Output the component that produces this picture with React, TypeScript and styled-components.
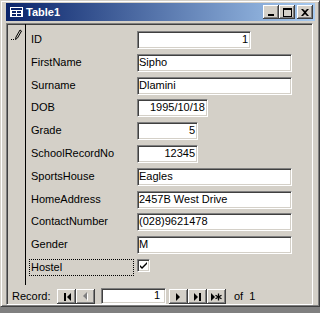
import React from 'react';
import styled, { createGlobalStyle, css } from 'styled-components';

const GlobalStyle = createGlobalStyle`
  html, body { margin: 0; padding: 0; }
  body {
    background: #808080;
    width: 320px;
    height: 313px;
    overflow: hidden;
    font-family: "Liberation Sans", Arial, sans-serif;
    font-size: 11px;
    color: #000;
  }
`;

const raised = css`
  background: #d4d0c8;
  box-shadow: inset -1px -1px #404040, inset 1px 1px #ffffff,
    inset -2px -2px #808080, inset 2px 2px #d4d0c8;
`;

const sunken = css`
  border: 1px solid;
  border-color: #808080 #ffffff #ffffff #808080;
  box-shadow: inset 1px 1px #404040, inset -1px -1px #d4d0c8;
`;

const Window = styled.div`
  box-sizing: border-box;
  width: 320px;
  height: 307px;
  background: #d4d0c8;
  border: 1px solid;
  border-color: #d4d0c8 #404040 #404040 #d4d0c8;
  box-shadow: inset 1px 1px #ffffff, inset -1px -1px #808080;
  padding: 2px 4px 1px 5px;
  display: flex;
  flex-direction: column;
`;

const TitleBar = styled.div`
  height: 18px;
  flex: none;
  display: flex;
  align-items: center;
  padding: 0 2px 0 4px;
  background: linear-gradient(to right, #0a246a, #a6caf0);
  color: #fff;
  font-weight: bold;
  font-size: 11px;
`;

const TitleText = styled.span`
  flex: 1;
  margin-left: 3px;
  line-height: 18px;
`;

const CaptionButtons = styled.div`
  display: flex;
  align-items: center;
`;

const CaptionButton = styled.div<{ $gap?: boolean }>`
  ${raised};
  width: 16px;
  height: 14px;
  display: flex;
  align-items: center;
  justify-content: center;
  margin-left: ${(p) => (p.$gap ? '2px' : '0')};
`;

const Client = styled.div`
  ${sunken};
  flex: 1;
  margin: 2px 2px 0 0;
  display: flex;
  flex-direction: column;
  min-height: 0;
`;

const FormArea = styled.div`
  flex: 1;
  display: flex;
  min-height: 0;
`;

const RecordSelector = styled.div`
  box-sizing: border-box;
  width: 19px;
  border-right: 1px solid #000;
  padding: 5px 0 0 4px;
`;

const Detail = styled.div`
  flex: 1;
  display: flex;
  flex-direction: column;
  gap: 4.8px;
  padding-top: 7px;
`;

const Row = styled.div`
  display: flex;
  align-items: flex-start;
  height: 18px;
`;

const Label = styled.div<{ $focused?: boolean }>`
  box-sizing: border-box;
  width: 105px;
  height: 17px;
  margin: 0 3px;
  padding-left: 1px;
  line-height: 15px;
  border: 1px dotted ${(p) => (p.$focused ? '#000' : 'transparent')};
  white-space: nowrap;
`;

const TextBox = styled.div<{ $w: number; $right?: boolean }>`
  ${sunken};
  box-sizing: border-box;
  width: ${(p) => p.$w}px;
  height: 18px;
  background: #fff;
  line-height: 14px;
  padding: 0 2px 0 1px;
  text-align: ${(p) => (p.$right ? 'right' : 'left')};
  white-space: nowrap;
  overflow: hidden;
`;

const CheckBox = styled.div`
  ${sunken};
  box-sizing: border-box;
  width: 13px;
  height: 13px;
  background: #fff;
  display: flex;
  align-items: center;
  justify-content: center;
`;

const NavBar = styled.div`
  box-sizing: border-box;
  height: 19px;
  flex: none;
  display: flex;
  align-items: flex-start;
  padding: 4px 0 0 5px;
`;

const NavLabel = styled.span`
  width: 45px;
  line-height: 15px;
`;

const NavButton = styled.div`
  ${raised};
  width: 19px;
  height: 15px;
  display: flex;
  align-items: center;
  justify-content: center;
`;

const NavBox = styled.div`
  ${sunken};
  box-sizing: border-box;
  width: 65px;
  height: 16px;
  margin: -1px 3px 0 6px;
  background: #fff;
  text-align: right;
  line-height: 12px;
  padding-right: 5px;
`;

const NavOf = styled.span`
  margin-left: 8px;
  line-height: 15px;
`;

const TableIcon = () => (
  <svg width="13" height="10" viewBox="0 0 13 10">
    <rect x="0.5" y="0.5" width="12" height="9" fill="#ffffff" stroke="#ffffff" />
    <rect x="1" y="1" width="11" height="2" fill="#0a246a" />
    <rect x="2" y="4" width="4" height="2" fill="#0a246a" />
    <rect x="7" y="4" width="4" height="2" fill="#0a246a" />
    <rect x="2" y="7" width="4" height="2" fill="#0a246a" />
    <rect x="7" y="7" width="4" height="2" fill="#0a246a" />
  </svg>
);

const MinGlyph = () => (
  <svg width="8" height="7" viewBox="0 0 8 7">
    <rect x="1" y="5" width="6" height="2" fill="#000" />
  </svg>
);

const MaxGlyph = () => (
  <svg width="9" height="9" viewBox="0 0 9 9">
    <rect x="0.5" y="0.5" width="8" height="8" fill="none" stroke="#000" />
    <rect x="0" y="0" width="9" height="2" fill="#000" />
  </svg>
);

const CloseGlyph = () => (
  <svg width="8" height="7" viewBox="0 0 8 7">
    <path d="M0 0h2l2 2 2-2h2L5 3.5 8 7H6L4 5 2 7H0l3-3.5z" fill="#000" />
  </svg>
);

const Pencil = () => (
  <svg width="11" height="12" viewBox="0 0 11 12">
    <rect x="0" y="10" width="1" height="1" fill="#000" />
    <rect x="2" y="10" width="1" height="1" fill="#000" />
    <path d="M4.5 10.5 L5 8 L9 1 L10.5 2 L6.5 9 Z" fill="none" stroke="#000" strokeWidth="1" />
  </svg>
);

const Check = () => (
  <svg width="9" height="9" viewBox="0 0 9 9">
    <path d="M1 4 L3 6 L8 1 L8 3 L3 8 L1 6 Z" fill="#000" />
  </svg>
);

const Tri = ({ dir, disabled }: { dir: 'l' | 'r'; disabled?: boolean }) => {
  const color = disabled ? '#808080' : '#000';
  return dir === 'l' ? (
    <path d="M4 0 L0 4 L4 8 Z" fill={color} />
  ) : (
    <path d="M0 0 L4 4 L0 8 Z" fill={color} />
  );
};

const FirstIcon = () => (
  <svg width="8" height="8" viewBox="0 0 8 8">
    <rect x="1" y="0" width="2" height="8" fill="#000" />
    <g transform="translate(4 0)">
      <Tri dir="l" />
    </g>
  </svg>
);

const PrevIcon = () => (
  <svg width="6" height="9" viewBox="0 0 6 9">
    <g transform="translate(1 1)">
      <path d="M4 0 L0 4 L4 8 Z" fill="#ffffff" />
    </g>
    <Tri dir="l" disabled />
  </svg>
);

const NextIcon = () => (
  <svg width="5" height="8" viewBox="0 0 5 8">
    <Tri dir="r" />
  </svg>
);

const LastIcon = () => (
  <svg width="8" height="8" viewBox="0 0 8 8">
    <Tri dir="r" />
    <rect x="5" y="0" width="2" height="8" fill="#000" />
  </svg>
);

const NewIcon = () => (
  <svg width="11" height="8" viewBox="0 0 11 8">
    <Tri dir="r" />
    <path d="M7.5 0.5v7M4.5 2.2l6 3.6M10.5 2.2l-6 3.6" stroke="#000" strokeWidth="1.3" />
  </svg>
);

type Field = {
  label: string;
  value?: string;
  w: number;
  right?: boolean;
  check?: boolean;
  focused?: boolean;
};

const fields: Field[] = [
  { label: 'ID', value: '1', w: 114, right: true },
  { label: 'FirstName', value: 'Sipho', w: 155 },
  { label: 'Surname', value: 'Dlamini', w: 155 },
  { label: 'DOB', value: '1995/10/18', w: 71, right: true },
  { label: 'Grade', value: '5', w: 61, right: true },
  { label: 'SchoolRecordNo', value: '12345', w: 61, right: true },
  { label: 'SportsHouse', value: 'Eagles', w: 155 },
  { label: 'HomeAddress', value: '2457B West Drive', w: 155 },
  { label: 'ContactNumber', value: '(028)9621478', w: 155 },
  { label: 'Gender', value: 'M', w: 155 },
  { label: 'Hostel', w: 13, check: true, focused: true },
];

export default function App() {
  return (
    <>
      <GlobalStyle />
      <Window>
        <TitleBar>
          <TableIcon />
          <TitleText>Table1</TitleText>
          <CaptionButtons>
            <CaptionButton>
              <MinGlyph />
            </CaptionButton>
            <CaptionButton>
              <MaxGlyph />
            </CaptionButton>
            <CaptionButton $gap>
              <CloseGlyph />
            </CaptionButton>
          </CaptionButtons>
        </TitleBar>
        <Client>
          <FormArea>
            <RecordSelector>
              <Pencil />
            </RecordSelector>
            <Detail>
              {fields.map((f) => (
                <Row key={f.label}>
                  <Label $focused={f.focused}>{f.label}</Label>
                  {f.check ? (
                    <CheckBox>
                      <Check />
                    </CheckBox>
                  ) : (
                    <TextBox $w={f.w} $right={f.right}>
                      {f.value}
                    </TextBox>
                  )}
                </Row>
              ))}
            </Detail>
          </FormArea>
          <NavBar>
            <NavLabel>Record:</NavLabel>
            <NavButton>
              <FirstIcon />
            </NavButton>
            <NavButton>
              <PrevIcon />
            </NavButton>
            <NavBox>1</NavBox>
            <NavButton>
              <NextIcon />
            </NavButton>
            <NavButton>
              <LastIcon />
            </NavButton>
            <NavButton>
              <NewIcon />
            </NavButton>
            <NavOf>of&nbsp; 1</NavOf>
          </NavBar>
        </Client>
      </Window>
    </>
  );
}
